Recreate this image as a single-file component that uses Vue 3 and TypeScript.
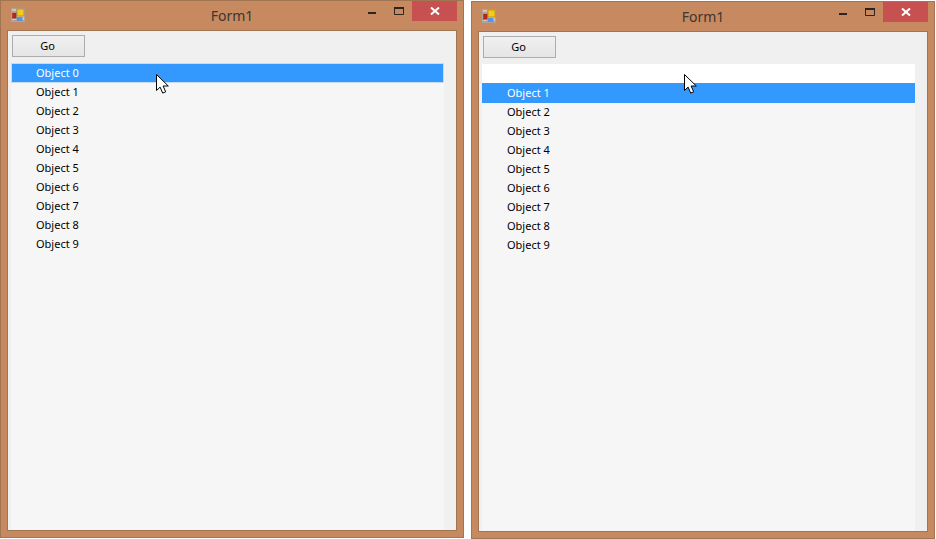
<script setup lang="ts">
interface Win {
  id: string
  items: string[]
  selected: number
  blankFirst: boolean
}
const wins: Win[] = [
  { id: 'a', items: Array.from({ length: 10 }, (_, i) => `Object ${i}`), selected: 0, blankFirst: false },
  { id: 'b', items: Array.from({ length: 9 }, (_, i) => `Object ${i + 1}`), selected: 0, blankFirst: true },
]
</script>

<template>
  <div class="desktop">
    <section v-for="w in wins" :key="w.id" class="window" :class="w.id">
      <header class="titlebar">
        <svg class="appicon" width="14" height="14" viewBox="0 0 14 14">
          <rect x="0.5" y="0.5" width="13" height="13" fill="#d9c3ae" stroke="#aba59e" />
          <path d="M5.5 0v14M0 3.5h5M0 10.5h5M0 12.5h14" stroke="#aba59e" fill="none" />
          <rect x="6" y="1" width="7" height="7" fill="#f6c91f" stroke="#b98c12" stroke-width="0.8" />
          <rect x="1.5" y="5" width="3.5" height="5" fill="#c8201c" stroke="#8c2a20" stroke-width="0.6" />
          <rect x="6" y="9" width="5.5" height="4" fill="#5a93e2" />
        </svg>
        <div class="title">Form1</div>
        <div class="controls">
          <svg class="min" width="8" height="2" viewBox="0 0 8 2"><rect width="8" height="2" fill="#2a2522" /></svg>
          <svg class="max" width="10" height="8" viewBox="0 0 10 8">
            <path d="M.5 1.5h9v6h-9z" fill="none" stroke="#2a2522" />
            <rect width="10" height="2" fill="#2a2522" />
          </svg>
          <div class="close">
            <svg width="10" height="8" viewBox="0 0 10 8"><path d="M1 .5 9 7.5M9 .5 1 7.5" stroke="#fff" stroke-width="2" /></svg>
          </div>
        </div>
      </header>
      <main class="client">
        <div class="toolbar"><button class="go">Go</button></div>
        <div class="listwrap">
          <ul class="list">
            <li v-if="w.blankFirst" class="blank"></li>
            <li
              v-for="(it, i) in w.items"
              :key="it"
              class="row"
              :class="{ sel: i === w.selected }"
            >{{ it }}</li>
          </ul>
        </div>
      </main>
      <svg class="cursor" width="14" height="22" viewBox="0 0 14 22">
        <path d="M.5.5v16l3.6-3.4 2.6 6 3-1.3-2.6-5.8h5.2z" fill="#fff" stroke="#000" stroke-width="1" />
      </svg>
    </section>
  </div>
</template>

<style>
html, body { margin: 0; background: #fff; }
</style>

<style scoped>
.desktop {
  width: 936px;
  height: 539px;
  display: flex;
  gap: 7px;
  overflow: hidden;
  font-family: "Noto Sans", "Open Sans", sans-serif;
}
.window {
  position: relative;
  box-sizing: border-box;
  width: 464px;
  height: 538px;
  background: #c78a60;
  border: 1px solid #a17552;
  padding: 0 6px 6px;
  display: flex;
  flex-direction: column;
}
.window.b { margin-top: 1px; }
.titlebar {
  position: relative;
  height: 29px;
  flex: none;
}
.appicon { position: absolute; left: 4px; top: 7px; }
.title {
  position: absolute;
  left: 0;
  right: 0;
  top: 4px;
  text-align: center;
  font-size: 14px;
  line-height: 22px;
  color: #3c3530;
}
.controls {
  position: absolute;
  right: 0;
  top: 0;
  display: flex;
}
.min { position: absolute; right: 81px; top: 11px; }
.max { position: absolute; right: 53px; top: 6px; }
.close {
  width: 45px;
  height: 20px;
  background: #c75050;
  display: flex;
  align-items: center;
  justify-content: center;
}
.client {
  flex: 1;
  min-height: 0;
  background: #f0f0f0;
  border: 1px solid #a17552;
  display: flex;
  flex-direction: column;
}
.toolbar {
  height: 32px;
  flex: none;
  padding: 4px 0 0 4px;
  box-sizing: border-box;
}
.go {
  display: block;
  box-sizing: border-box;
  width: 73px;
  height: 22px;
  padding: 0 2px 0 0;
  border: 1px solid #adadad;
  border-radius: 0;
  background: linear-gradient(#f0f0f0, #e5e5e5);
  font: 11px/18px "Noto Sans", sans-serif;
  color: #000;
}
.listwrap {
  flex: 1;
  min-height: 0;
  padding: 0 12px 0 3px;
}
.list {
  list-style: none;
  margin: 0;
  padding: 0;
  height: 100%;
  background: #f6f6f6;
}
.row, .blank {
  height: 19px;
  line-height: 19px;
  padding-left: 25px;
  font-size: 11px;
  color: #000;
}
.blank { background: #fff; }
.row.sel { background: #3399ff; color: #fff; }
.a .row.sel { box-shadow: inset 1px 1px 0 #c5dcf2, inset -1px 0 0 #c5dcf2, 0 1px 0 #c5dcf2; }
.b .row.sel { box-shadow: 0 1px 0 #3399ff; }
.cursor { position: absolute; top: 73px; left: 155px; }
.b .cursor { left: 212px; top: 72px; }
</style>
